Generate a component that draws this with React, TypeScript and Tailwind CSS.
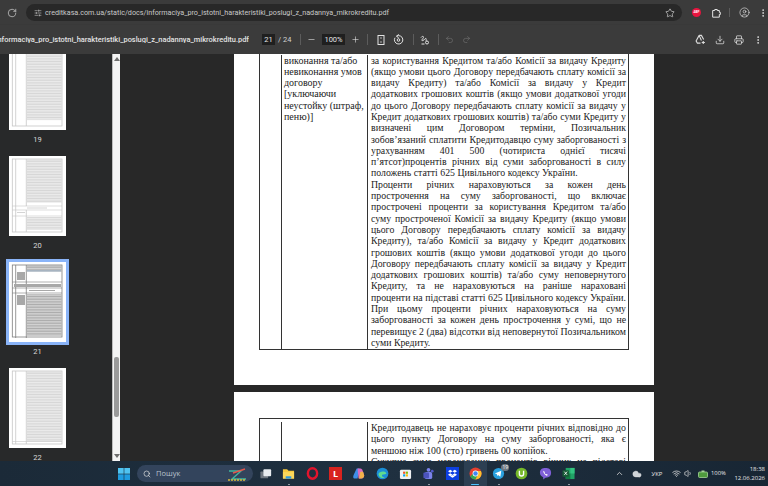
import React from 'react'
import {
  ChevronUp,
  Cloud,
  Download,
  EllipsisVertical,
  Minus,
  Plus,
  Printer,
  Redo2,
  RotateCw,
  Search,
  SlidersHorizontal,
  Star,
  Undo2,
  UserCircle,
  Volume1,
  Wifi,
} from 'lucide-react'

const firstPageLines: [string, boolean][] = [
  ['за користування Кредитом та/або Комісії за видачу Кредиту', true],
  ['(якщо умови цього Договору передбачають сплату комісії за', true],
  ['видачу Кредиту) та/або Комісії за видачу у Кредит', true],
  ['додаткових грошових коштів (якщо умови додаткової угоди', true],
  ['до цього Договору передбачають сплату комісії за видачу у', true],
  ['Кредит додаткових грошових коштів) та/або суми Кредиту у', true],
  ['визначені цим Договором терміни, Позичальник', true],
  ['зобов’язаний сплатити Кредитодавцю суму заборгованості з', true],
  ['урахуванням 401 500 (чотириста однієї тисячі', true],
  ['п’ятсот)процентів річних від суми заборгованості в силу', true],
  ['положень статті 625 Цивільного кодексу України.', false],
  ['Проценти річних нараховуються за кожен день', true],
  ['прострочення на суму заборгованості, що включає', true],
  ['прострочені проценти за користування Кредитом та/або', true],
  ['суму простроченої Комісії за видачу Кредиту (якщо умови', true],
  ['цього Договору передбачають сплату комісії за видачу', true],
  ['Кредиту), та/або Комісії за видачу у Кредит додаткових', true],
  ['грошових коштів (якщо умови додаткової угоди до цього', true],
  ['Договору передбачають сплату комісії за видачу у Кредит', true],
  ['додаткових грошових коштів) та/або суму неповернутого', true],
  ['Кредиту, та не нараховуються на раніше нараховані', true],
  ['проценти на підставі статті 625 Цивільного кодексу України.', true],
  ['При цьому проценти річних нараховуються на суму', true],
  ['заборгованості за кожен день прострочення у сумі, що не', true],
  ['перевищує 2 (два) відсотки від неповернутої Позичальником', true],
  ['суми Кредиту.', false],
]

const secondPageLines: [string, boolean][] = [
  ['Кредитодавець не нараховує проценти річних відповідно до', true],
  ['цього пункту Договору на суму заборгованості, яка є', true],
  ['меншою ніж 100 (сто) гривень 00 копійок.', false],
  ['Сукупна сума нарахованих процентів річних на підставі', true],
]

const middleLines = ['виконання та/або', 'невиконання умов', 'договору', '[уключаючи', 'неустойку (штраф,', 'пеню)]']

const Line = ({ text, justify }: { text: string; justify: boolean }) => (
  <div className={justify ? 'h-[11.3px] whitespace-nowrap text-justify [text-align-last:justify]' : 'h-[11.3px] whitespace-nowrap'}>
    {text}
  </div>
)

// page preview in the sidebar: table frame plus grey text stripes
const Thumb = ({ page }: { page: number }) => {
  const dark = page === 21
  const stroke = dark ? '#7d7d7d' : '#c6c6c6'
  const stripe = dark ? '#a8a8a8' : '#d4d4d4'
  const top = page === 19 ? -4 : 3
  const rows = Array.from({ length: 46 }, (_, i) => top + 0.6 + i * 1.6).filter((y) => y < 74)
  const skip = (y: number) => (page === 20 && y > 46 && y < 60) || (page === 21 && y > 9 && y < 31)
  return (
    <svg viewBox="0 0 57 80" className="block h-[80px] w-[57px] bg-white">
      {rows.map((y) =>
        skip(y) ? null : <rect key={`bg${y}`} x="18" y={y} width="34.5" height="1.6" fill={dark ? '#dcdcdc' : '#f0f0f0'} />,
      )}
      <rect x="3.3" y={top} width="49.7" height={(page === 21 ? 75 : 76) - top} fill="none" stroke={stroke} strokeWidth="0.8" />
      <line x1="6.7" x2="6.7" y1={top} y2="76" stroke={stroke} strokeWidth="0.8" />
      <line x1="17.3" x2="17.3" y1={top} y2={page === 20 ? 50 : 76} stroke={stroke} strokeWidth="0.8" />
      {page === 20 && (
        <>
          <line x1="3.3" x2="53" y1="50" y2="50" stroke={stroke} strokeWidth="0.6" />
          <line x1="3.3" x2="53" y1="54" y2="54" stroke={stroke} strokeWidth="0.6" />
          <line x1="3.3" x2="53" y1="60" y2="60" stroke={stroke} strokeWidth="0.6" />
          <line x1="17.3" x2="17.3" y1="54" y2="76" stroke={stroke} strokeWidth="0.8" />
          <rect x="18" y="51.5" width="20" height="1" fill={stripe} />
          <rect x="8" y="56" width="8" height="1" fill={stripe} />
        </>
      )}
      {page === 21 && (
        <>
          <rect x="18" y="8" width="34" height="1.4" fill="#a8c7e8" />
          <line x1="3.3" x2="53" y1="20" y2="20" stroke={stroke} strokeWidth="0.6" />
          <rect x="5" y="22" width="47" height="3" fill={stripe} />
          <line x1="3.3" x2="53" y1="26" y2="26" stroke={stroke} strokeWidth="0.6" />
          <rect x="20" y="28" width="26" height="1" fill={stripe} />
          <line x1="3.3" x2="53" y1="31" y2="31" stroke={stroke} strokeWidth="0.6" />
          <rect x="8" y="10" width="8" height="8" fill={stripe} />
          <rect x="8" y="33" width="8" height="10" fill={stripe} />
        </>
      )}
      {page === 22 && <line x1="3.3" x2="53" y1="73.5" y2="73.5" stroke={stroke} strokeWidth="0.6" />}
      {rows.map((y) =>
        skip(y) ? null : <rect key={y} x="18" y={y} width="34.5" height="0.9" fill={stripe} />,
      )}
    </svg>
  )
}

const Sidebar = () => (
  <div className="flex w-[112px] shrink-0 flex-col items-start overflow-hidden bg-[#28292a] pl-[9px]">
    <div className="-mt-[4px] flex w-[57px] flex-col items-center">
      {[19, 20, 21, 22].map((n) => (
        <div key={n} className="flex flex-col items-center">
          <div className={n === 21 ? 'outline-3 outline-[#8ab4f8]' : ''}>
            <Thumb page={n} />
          </div>
          <div className="flex h-[26px] items-start pt-[4px] font-['Roboto',sans-serif] text-[7.5px] leading-[12px] text-[#d8d8d8]">{n}</div>
        </div>
      ))}
    </div>
  </div>
)

const PageScrollbar = () => (
  <div className="relative flex w-[8px] shrink-0 flex-col items-center justify-between border-l border-[#bdbdbd] bg-[#f4f4f4] py-[3px]">
    <div className="h-0 w-0 border-x-[3px] border-b-[4px] border-x-transparent border-b-[#6e6e6e]" />
    <div className="absolute top-[303px] h-[60px] w-[5px] rounded-[2px] bg-[#9a9a9a]" />
    <div className="h-0 w-0 border-x-[3px] border-t-[4px] border-x-transparent border-t-[#6e6e6e]" />
  </div>
)

const AddressBar = () => (
  <div className="flex h-[25px] shrink-0 items-center bg-[#3b3b3b] text-[#e3e3e3]">
    <div className="flex w-[26px] justify-center">
      <RotateCw size={10} strokeWidth={1.5} className="ml-[-2px]" />
    </div>
    <div className="flex h-[17px] w-[656px] items-center rounded-full bg-[#282828] pl-[4px]">
      <div className="flex w-[15px] justify-center">
        <SlidersHorizontal size={8} strokeWidth={1.5} />
      </div>
      <span className="whitespace-nowrap font-['Roboto',sans-serif] text-[7.2px] leading-none text-[#c8c8c8]">
        creditkasa.com.ua/static/docs/informaciya_pro_istotni_harakteristiki_poslugi_z_nadannya_mikrokreditu.pdf
      </span>
      <div className="ml-auto mr-[7px]">
        <Star size={10} strokeWidth={1.5} />
      </div>
    </div>
    <div className="ml-[10px] flex h-[9px] w-[9px] items-center justify-center rounded-full bg-[#e8153f] font-['Roboto',sans-serif] text-[3px] font-bold text-white">ABP</div>
    <svg viewBox="0 0 12 12" className="ml-[9.5px] h-[10px] w-[10px]" fill="none" stroke="#e3e3e3" strokeWidth="1.2">
      <path d="M2 3h2.5V1.800h3V3H10v2.200h1.200v2.600H10V11H2z" />
    </svg>
    <div className="ml-[8.5px] h-[9px] w-px bg-[#5c5c5c]" />
    <UserCircle size={11} strokeWidth={1.4} className="ml-[8.5px]" />
    <EllipsisVertical size={10} strokeWidth={2} className="ml-[8.5px]" />
  </div>
)

const Sep = ({ className }: { className: string }) => <div className={`h-[11px] w-px shrink-0 bg-[#5c5c5c] ${className}`} />

const PdfToolbar = () => (
  <div className="flex h-[29px] shrink-0 items-center overflow-hidden bg-[#3b3b3b] font-['Roboto',sans-serif] text-[#e3e3e3] shadow-[0_1px_2px_rgba(0,0,0,0.4)]">
    <div className="w-[249px] shrink-0 overflow-hidden whitespace-nowrap text-[7.45px] font-medium leading-none [direction:rtl]">
      <bdi>informaciya_pro_istotni_harakteristiki_poslugi_z_nadannya_mikrokreditu.pdf</bdi>
    </div>
    <div className="ml-[13px] flex h-[11px] w-[13px] shrink-0 items-center justify-center bg-[#1f1f1f] text-[7.5px] leading-none">21</div>
    <span className="ml-[3px] w-[12px] shrink-0 whitespace-nowrap text-[7.5px] leading-none text-[#d0d0d0]">/ 24</span>
    <Sep className="ml-[10px]" />
    <Minus size={9} strokeWidth={1.6} className="ml-[5.5px] shrink-0" />
    <div className="ml-[6.5px] flex h-[11px] w-[23px] shrink-0 items-center justify-center bg-[#1f1f1f] text-[7.5px] leading-none">100%</div>
    <Plus size={9} strokeWidth={1.6} className="ml-[5.5px] shrink-0" />
    <Sep className="ml-[7px]" />
    <svg viewBox="0 0 10 10" className="ml-[8.5px] h-[10px] w-[10px] shrink-0" fill="none" stroke="#e3e3e3" strokeWidth="1">
      <rect x="2" y="0.5" width="6" height="9" />
      <path d="M5 2.400v1.200M5 6.400v1.200" strokeWidth="1.4" />
    </svg>
    <svg viewBox="0 0 11 11" className="ml-[6.5px] h-[11px] w-[11px] shrink-0" fill="none" stroke="#e3e3e3" strokeWidth="1">
      <path d="M3.5 2.200a4.200 4.200 0 1 1-1.500 1.500" />
      <path d="M5.800 0.400L3.500 2.200l2.300 1.800" />
      <circle cx="5.5" cy="6" r="1.3" />
    </svg>
    <Sep className="ml-[9.5px]" />
    <svg viewBox="0 0 10 10" className="ml-[6px] h-[10px] w-[10px] shrink-0" fill="none" stroke="#e3e3e3" strokeWidth="1">
      <path d="M1 2.500c1.500-2 3.500-1 2 .8S1.500 6 3 5.500 5 3 6 3.500 5 6 6.500 5.500" />
      <circle cx="7" cy="7.5" r="1.5" />
      <path d="M1.500 9h3" />
    </svg>
    <Sep className="ml-[7.5px]" />
    <Undo2 size={9} strokeWidth={1.5} className="ml-[6px] shrink-0 text-[#777]" />
    <Redo2 size={9} strokeWidth={1.5} className="ml-[8px] shrink-0 text-[#777]" />
    <svg viewBox="0 0 12 12" className="ml-auto h-[11px] w-[11px] shrink-0" fill="none" stroke="#dcdcdc" strokeWidth="1.2">
      <path d="M4.500 1.500h2.500L9.500 6M4.500 1.500L1.200 7.500 2.600 10H6M4.500 1.500L7 7" />
      <path d="M9 7.500v3.500M7.300 9.200h3.500" />
    </svg>
    <Download size={10} strokeWidth={1.8} className="ml-[9px] shrink-0" />
    <Printer size={10} strokeWidth={1.8} className="ml-[9px] shrink-0" />
    <EllipsisVertical size={10} strokeWidth={2} className="ml-[9px] mr-[5px] shrink-0" />
  </div>
)

const TableRow = ({ middle, lines, className }: { middle?: string[]; lines: [string, boolean][]; className: string }) => (
  <div className={`ml-[25px] flex w-[370px] border-x border-[#333] ${className}`}>
    <div className="w-[22px] shrink-0 border-r border-[#333]" />
    <div className="w-[86px] shrink-0 border-r border-[#333] pl-[2px] text-[10px]">
      {middle?.map((line) => (
        <div key={line} className="h-[11.3px] whitespace-nowrap">
          {line}
        </div>
      ))}
    </div>
    <div className="w-[260px] pl-[3px] pr-[2px]">
      {lines.map(([text, justify]) => (
        <Line key={text} text={text} justify={justify} />
      ))}
    </div>
  </div>
)

const PdfPages = () => (
  <div className="min-w-0 flex-1 overflow-hidden bg-[#282828] pl-[114px] font-['Liberation_Serif',serif] text-[9.8px] leading-[11.3px] text-[#222]">
    <div className="h-[331px] w-[420px] bg-white">
      <TableRow middle={middleLines} lines={firstPageLines} className="h-[296px] border-b pt-[0.5px]" />
    </div>
    <div className="mt-[7px] h-[200px] w-[420px] bg-white pt-[26px]">
      <TableRow lines={secondPageLines} className="h-[174px] border-t pt-[3px]" />
    </div>
  </div>
)

const iconBox = 'relative flex h-[25px] w-[23.3px] items-center justify-center'

const TaskIcon = ({ children, active, running }: { children: React.ReactNode; active?: boolean; running?: boolean }) => (
  <div className={active ? `${iconBox} bg-[#2c3f52]` : iconBox}>
    {children}
    {active && <div className="absolute bottom-[1px] h-[1.5px] w-[8px] rounded-full bg-[#4cc2ff]" />}
    {running && !active && <div className="absolute bottom-[1px] h-[1.5px] w-[2px] rounded-full bg-[#a0a8b0]" />}
  </div>
)

const Taskbar = () => (
  <div className="flex h-[25px] shrink-0 items-center bg-gradient-to-r from-[#1b2a38] via-[#1f3040] to-[#182634] font-['Open_Sans',sans-serif] text-[#e6e6e6]">
    <div className="ml-[112px] flex w-[23px] justify-center">
      <svg viewBox="0 0 12 12" className="h-[12px] w-[12px]">
        <rect x="0" y="0" width="5.7" height="5.7" fill="#4fc3f1" />
        <rect x="6.3" y="0" width="5.7" height="5.7" fill="#4fc3f1" />
        <rect x="0" y="6.3" width="5.7" height="5.7" fill="#1f9ce0" />
        <rect x="6.3" y="6.3" width="5.7" height="5.7" fill="#1f9ce0" />
      </svg>
    </div>
    <div className="ml-[2px] flex h-[17px] w-[116px] items-center overflow-hidden rounded-full bg-[#33445c] pl-[6px]">
      <Search size={8} strokeWidth={2} />
      <span className="ml-[5px] text-[7.5px] leading-none text-[#b9c2cc]">Пошук</span>
      <svg viewBox="0 0 24 14" className="ml-auto mr-[4px] h-[14px] w-[24px]">
        <path d="M4 4h12L7 12h14" fill="none" stroke="#3fb5a0" strokeWidth="1.4" />
        <path d="M8 6l12-4" stroke="#e2574c" strokeWidth="1.4" />
        <path d="M3 13h18" stroke="#d9b93a" strokeWidth="1.4" strokeDasharray="2 1" />
      </svg>
    </div>
    <div className="ml-[1px] flex">
      <TaskIcon>
        <svg viewBox="0 0 14 14" className="h-[12px] w-[12px]">
          <rect x="0.5" y="4" width="9" height="8" rx="1" fill="#6f7780" />
          <rect x="4" y="1.5" width="9" height="8" rx="1" fill="#e8ecef" />
        </svg>
      </TaskIcon>
      <TaskIcon running>
        <svg viewBox="0 0 14 14" className="h-[13px] w-[13px]">
          <path d="M1 2.5h4.5L7 4h6v8.5H1z" fill="#f7c93e" />
          <rect x="1" y="5.5" width="12" height="7" fill="#fbd75b" />
          <rect x="4" y="10" width="6" height="2.5" fill="#2f9ae0" />
        </svg>
      </TaskIcon>
      <TaskIcon>
        <svg viewBox="0 0 14 14" className="h-[13px] w-[13px]">
          <ellipse cx="7" cy="7" rx="5" ry="5.6" fill="none" stroke="#e3142d" strokeWidth="2.6" />
        </svg>
      </TaskIcon>
      <TaskIcon>
        <div className="flex h-[13px] w-[13px] items-center justify-center bg-[#d8231f] text-[9px] font-bold leading-none text-white">L</div>
      </TaskIcon>
      <TaskIcon>
        <svg viewBox="0 0 14 14" className="h-[13px] w-[13px]">
          <path d="M5 1.5h3L6 12.5H3C1 12.5 1 10 2 8z" fill="#3f8ee8" />
          <path d="M6 1.5h3c1.5 0 2 1 2.5 2.5L13 9c.3 2-1 3.5-3 3.5H7z" fill="#d86bc4" />
          <path d="M7.5 12.5L9 5h3l1 4c.3 2-1 3.5-3 3.5z" fill="#f2b24a" />
        </svg>
      </TaskIcon>
      <TaskIcon>
        <svg viewBox="0 0 14 14" className="h-[13px] w-[13px]">
          <circle cx="7" cy="7" r="6.3" fill="#1b8ed6" />
          <path d="M2.5 8c1-3.5 6.5-4 8.5-1.5.6 1-.7 1.500-3 1.500-2.500 0-2 3 1.500 3-2.500 2-6.500 1-7-4z" fill="#5fdc8f" />
        </svg>
      </TaskIcon>
      <TaskIcon>
        <svg viewBox="0 0 14 14" className="h-[13px] w-[13px]">
          <rect x="1" y="3" width="12" height="10" rx="1.5" fill="#eef0f2" />
          <rect x="4.4" y="5" width="2.3" height="2.3" fill="#f25022" />
          <rect x="7.3" y="5" width="2.3" height="2.3" fill="#7fba00" />
          <rect x="4.4" y="7.9" width="2.3" height="2.3" fill="#00a4ef" />
          <rect x="7.3" y="7.9" width="2.3" height="2.3" fill="#ffb900" />
        </svg>
      </TaskIcon>
      <TaskIcon running>
        <svg viewBox="0 0 14 14" className="h-[13px] w-[13px]">
          <circle cx="7" cy="3" r="2" fill="#7b83eb" />
          <circle cx="11" cy="4.5" r="1.5" fill="#5059c9" />
          <rect x="3" y="5.5" width="8" height="7.5" rx="2" fill="#7b83eb" />
          <rect x="1.5" y="6" width="6" height="6" rx="1" fill="#4b53bc" />
        </svg>
      </TaskIcon>
      <TaskIcon>
        <div className="flex h-[13px] w-[13px] items-center justify-center bg-[#0d3fe0]">
          <svg viewBox="0 0 12 12" className="h-[9px] w-[9px]" fill="#fff">
            <path d="M3 1L6 3 3 5 0 3zM9 1l3 2-3 2-3-2zM3 5.5l3 2-3 2-3-2zM9 5.5l3 2-3 2-3-2zM3 10l3-2 3 2-3 1.8z" />
          </svg>
        </div>
      </TaskIcon>
      <TaskIcon active>
        <svg viewBox="0 0 14 14" className="h-[13px] w-[13px]">
          <circle cx="7" cy="7" r="6.5" fill="#e5402f" />
          <path d="M1.3 10.2A6.5 6.5 0 0 0 7 13.5L10 7.5H4z" fill="#34a853" />
          <path d="M7 13.5A6.5 6.5 0 0 0 12.9 4.3H7l3 3.2z" fill="#fbc02d" />
          <circle cx="7" cy="7" r="3.1" fill="#fff" />
          <circle cx="7" cy="7" r="2.4" fill="#3f86f4" />
        </svg>
      </TaskIcon>
      <TaskIcon running>
        <svg viewBox="0 0 14 14" className="h-[13px] w-[13px]">
          <circle cx="7" cy="7" r="6" fill="#2aa0de" />
          <path d="M3 7l7-3-1 6.5-2.500-1.800-1 1-.3-2.200z" fill="#fff" />
        </svg>
        <div className="absolute right-[1px] top-[3px] flex h-[7px] w-[8px] items-center justify-center rounded-full bg-[#6d7680] text-[5px] leading-none text-white">19</div>
      </TaskIcon>
      <TaskIcon>
        <svg viewBox="0 0 14 14" className="h-[13px] w-[13px]">
          <circle cx="7" cy="7" r="6.3" fill="#76b82a" />
          <path d="M4 4v3.500a3 3 0 0 0 6 0V4H8.500v3.500a1.500 1.500 0 0 1-3 0V4z" fill="#fff" />
        </svg>
      </TaskIcon>
      <TaskIcon>
        <svg viewBox="0 0 14 14" className="h-[13px] w-[13px]">
          <path d="M7 1c3.500 0 6 1.500 6 5s-1.500 5.500-6 5.500L4.500 13.500V11C2 10 1 8.500 1 6c0-3.500 2.500-5 6-5z" fill="#7f5fd8" />
          <path d="M5 4c-.6.6-.5 1.500.5 3s2 2.300 3 2.300c.8 0 1-.8.7-1.100L8 7.500l-.6.4C6.800 7.600 6.300 7 6 6.300l.4-.6z" fill="#fff" />
        </svg>
      </TaskIcon>
      <TaskIcon running>
        <svg viewBox="0 0 14 14" className="h-[13px] w-[13px]">
          <rect x="4" y="1" width="9.5" height="12" fill="#21a366" />
          <rect x="9" y="1" width="4.5" height="6" fill="#33c481" />
          <rect x="4" y="7" width="5" height="6" fill="#107c41" />
          <rect x="0.5" y="3.5" width="7" height="7" rx="0.5" fill="#185c37" />
          <path d="M2.500 5l3 3.500M5.500 5l-3 3.500" stroke="#fff" strokeWidth="0.9" />
        </svg>
      </TaskIcon>
    </div>
    <div className="ml-auto flex w-[156px] items-center">
      <div className="flex w-[14px] justify-center">
        <ChevronUp size={9} strokeWidth={2} />
      </div>
      <div className="flex w-[21px] justify-center">
        <Cloud size={10} fill="#cfd4d8" strokeWidth={1} />
      </div>
      <span className="w-[20px] text-center text-[6px] leading-none">УКР</span>
      <div className="ml-[3px] flex w-[13px] justify-center">
        <Wifi size={9} strokeWidth={2} />
      </div>
      <div className="flex w-[10px] justify-center">
        <Volume1 size={9} strokeWidth={1.8} />
      </div>
      <svg viewBox="0 0 10 8" className="ml-[5px] h-[8px] w-[10px]">
        <rect x="0.5" y="2" width="9" height="5.5" rx="1" fill="#4f9a3e" stroke="#a6d398" strokeWidth="0.8" />
        <path d="M3.500 2V.5h3V2z" fill="#a6d398" />
      </svg>
      <span className="ml-[3px] w-[15px] whitespace-nowrap text-[5.8px] leading-none">100%</span>
      <div className="flex flex-1 flex-col items-end pr-[3px] text-[6px] leading-[9px]">
        <span>18:38</span>
        <span>12.06.2026</span>
      </div>
    </div>
  </div>
)

export default function App() {
  return (
    <div className="flex h-[486px] w-[768px] flex-col overflow-hidden bg-[#282828]">
      <AddressBar />
      <PdfToolbar />
      <div className="flex min-h-0 flex-1">
        <Sidebar />
        <PageScrollbar />
        <PdfPages />
      </div>
      <Taskbar />
    </div>
  )
}
